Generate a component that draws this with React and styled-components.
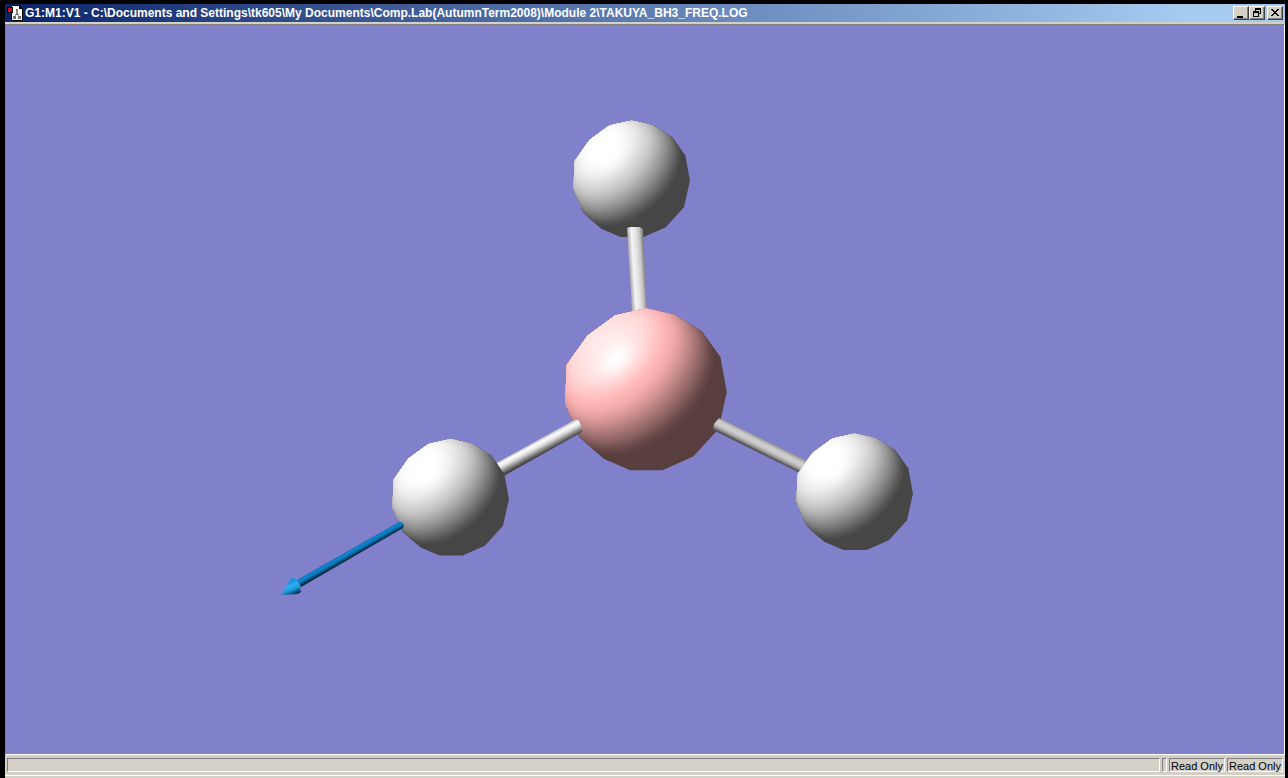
import React from 'react';
import styled, { createGlobalStyle } from 'styled-components';

const GlobalStyle = createGlobalStyle`
    * {
        box-sizing: border-box;
    }

    body {
        margin: 0;
        background: #000;
    }
`;

const Desktop = styled.div`
    display: flex;
    height: 100vh;
    padding: 4px 3px 0 5px;
    background: #000;
`;

const Window = styled.main`
    display: flex;
    flex: 1;
    flex-direction: column;
    min-width: 0;
    background: #d4d0c8;
`;

const TitleBar = styled.header`
    display: flex;
    flex: none;
    align-items: center;
    height: 18px;
    padding: 0 2px;
    background: linear-gradient(to right, #0a246a, #a6caf0 92%);
`;

const Title = styled.h1`
    flex: 1;
    min-width: 0;
    margin: 0 0 0 2px;
    overflow: hidden;
    color: #fff;
    font: bold 12px/18px 'Liberation Sans', Arial, sans-serif;
    text-overflow: ellipsis;
    white-space: nowrap;
`;

const WindowButtons = styled.div`
    display: flex;
`;

const WindowButton = styled.button`
    display: flex;
    width: 16px;
    height: 14px;
    margin-left: ${props => props.$apart ? '2px' : '0'};
    padding: 1px;
    border: 1px solid;
    border-color: #fff #404040 #404040 #fff;
    background: #d4d0c8;
    box-shadow: inset -1px -1px #808080;
`;

const Viewport = styled.section`
    flex: 1;
    min-height: 0;
    margin-top: 2px;
    border: 1px solid;
    border-color: #808080 #fff #fff #808080;
    background: #8180cb;
`;

const Scene = styled.svg`
    display: block;
    width: 100%;
    height: 100%;
`;

const StatusBar = styled.footer`
    display: flex;
    flex: none;
    gap: 2px;
    height: 23px;
    padding: 3px 2px 4px 2px;
    border-bottom: 2px solid #d4d0c8;
    box-shadow: inset 0 -1px #fff;
`;

const StatusPanel = styled.div`
    flex: ${props => props.$fill ? '1' : 'none'};
    min-width: 5px;
    border: 1px solid;
    border-color: #808080 #fff #fff #808080;
    color: #000;
    font: 11px/14px 'Liberation Sans', Arial, sans-serif;
    white-space: nowrap;
`;

const StatusText = styled(StatusPanel)`
    min-width: 56px;
    padding: 0 1px;
`;

// Unit vector towards the lamp is (LIGHT_XY, LIGHT_Z) once the ball is turned so +x faces it
const LIGHT_XY = 0.78;
const LIGHT_Z = 0.62;
const STEPS = 56;

const BALL = '2,-175 65,-161 123,-125 164,-70 178,7 160,87 105,147 38,177 -32,177 -90,152 -142,104 -174,32 -170,-53 -125,-116 -65,-160';

const HYDROGEN = [
    [0, [70, 70, 70]],
    [0.12, [86, 86, 86]],
    [0.35, [136, 136, 136]],
    [0.62, [198, 198, 198]],
    [0.82, [236, 236, 236]],
    [0.95, [255, 255, 255]],
    [1, [255, 255, 255]]
];

const BORON = [
    [0, [89, 62, 62]],
    [0.12, [106, 74, 74]],
    [0.35, [166, 117, 117]],
    [0.6, [240, 168, 168]],
    [0.7, [255, 184, 184]],
    [0.86, [255, 216, 216]],
    [1, [255, 232, 232]]
];

const shade = (ramp, k) => {
    const i = Math.max(1, ramp.findIndex(([stop]) => stop >= k));
    const [k0, from] = ramp[i - 1];
    const [k1, to] = ramp[i];
    const t = (k - k0) / (k1 - k0);
    return `rgb(${from.map((c, n) => Math.round(c + (to[n] - c) * t)).join(',')})`;
};

// Outline of the part of a unit ball that is lit more strongly than k
const litArea = (k) => {
    const a = Math.sqrt(1 - k * k);
    const b = a * LIGHT_Z;
    const u = k / LIGHT_XY;
    if (u >= 1) {
        const c = k * LIGHT_XY;
        return `M${c - b},0A${b},${a} 0 1 1 ${c + b},0A${b},${a} 0 1 1 ${c - b},0Z`;
    }
    const v = Math.sqrt(1 - u * u);
    const large = u > k * LIGHT_XY ? 1 : 0;
    return `M${u},${-v}A${b},${a} 0 ${large} 0 ${u},${v}L${u + 0.1},${v + 0.1}L2,2L2,-2L${u + 0.1},${-v - 0.1}Z`;
};

const Atom = ({ x, y, r, ramp, shine }) => (
    <g transform={`translate(${x} ${y}) scale(${r})`} clipPath="url(#ball)">
        <rect x="-1.1" y="-1.1" width="2.2" height="2.2" fill={shade(ramp, 0)} />
        <g transform="rotate(-132) scale(1.03)">
            {Array.from({ length: STEPS - 1 }, (_, i) => (i + 1) / STEPS).map(k =>
                <path key={k} d={litArea(k)} fill={shade(ramp, k)} />
            )}
        </g>
        <ellipse
            cx="-0.36"
            cy="-0.38"
            rx={shine}
            ry={shine * 0.7}
            fill="url(#shine)"
            transform="rotate(-42 -0.36 -0.38)"
        />
    </g>
);

const Rod = ({ id, points, from, to, stops }) => (
    <g>
        <linearGradient id={id} gradientUnits="userSpaceOnUse" x1={from[0]} y1={from[1]} x2={to[0]} y2={to[1]}>
            {stops.map((color, i) => <stop key={i} offset={i / (stops.length - 1)} stopColor={color} />)}
        </linearGradient>
        <polygon points={points} fill={`url(#${id})`} />
    </g>
);

const Molecule = () => (
    <Scene viewBox="6 25 1278 729" role="img" aria-label="BH3">
        <defs>
            <clipPath id="ball">
                <polygon points={BALL} transform="scale(0.00571)" />
            </clipPath>
            <radialGradient id="shine">
                <stop offset="0" stopColor="#fff" />
                <stop offset="0.25" stopColor="#fff" stopOpacity="0.8" />
                <stop offset="0.6" stopColor="#fff" stopOpacity="0.25" />
                <stop offset="1" stopColor="#fff" stopOpacity="0" />
            </radialGradient>
        </defs>
        <Atom x={631} y={178.5} r={58} ramp={HYDROGEN} shine={0.5} />
        <Rod
            id="bondTop"
            points="627,228 630,227 640,227 643,229 647,311 632,311"
            from={[629, 260]}
            to={[645, 259]}
            stops={['#a8a8a8', '#f4f4f4', '#e4e4e4', '#c4c4c4', '#707070']}
        />
        <Atom x={645} y={389} r={80.5} ramp={BORON} shine={0.5} />
        <Rod
            id="bondLeft"
            points="576,419 579,421 582,428 582,432 500,478 493,465"
            from={[535, 441]}
            to={[542, 454]}
            stops={['#b8b8b8', '#ffffff', '#d8d8d8', '#888888', '#404040']}
        />
        <Rod
            id="bondRight"
            points="719,418 810,462 804,475 713,430 714,424"
            from={[765, 440]}
            to={[759, 452]}
            stops={['#909090', '#c8c8c8', '#d0d0d0', '#a8a8a8', '#505050']}
        />
        <Atom x={450} y={497} r={58} ramp={HYDROGEN} shine={0.5} />
        <Atom x={854} y={491.5} r={58} ramp={HYDROGEN} shine={0.5} />
        <Rod
            id="shaft"
            points="399,522 402,522 404,525 403,528 301,587 297,580"
            from={[348, 551]}
            to={[352, 558]}
            stops={['#0872b4', '#0a88d0', '#0a70b0', '#053c60', '#021c30']}
        />
        <Rod
            id="head"
            points="281,595 292,577 297,580 300,586 301,592 298,594"
            from={[286, 584]}
            to={[292, 598]}
            stops={['#1c94dc', '#28b0f4', '#1c98d8', '#0a5078', '#032030']}
        />
    </Scene>
);

const AppIcon = () => (
    <svg width="16" height="16" viewBox="0 0 16 16" shapeRendering="crispEdges" aria-hidden="true">
        <path d="M4 0h9v1h1v1h1v1h1v13H4z" fill="#000" />
        <path d="M5 1h7v3h3v11H5z" fill="#fff" />
        <path d="M9 5h2v4H9zM8 9h1v2H8zM11 9h1v2h-1z" fill="#999" />
        <path d="M9 4h2v2H9zM9 8h2v2H9zM6 11h3v3H6zM11 11h3v3h-3z" fill="#707070" />
        <rect x="0" y="2" width="6" height="6" fill="#000" />
        <rect x="1" y="3" width="4" height="4" fill="#d01018" />
    </svg>
);

const ButtonGlyph = ({ d }) => (
    <svg width="12" height="10" viewBox="0 0 12 10" shapeRendering="crispEdges" aria-hidden="true">
        <path d={d} fill="#000" fillRule="evenodd" />
    </svg>
);

const MINIMIZE = 'M2 8h6v2H2z';
const RESTORE = 'M4 0h6v6H8V5h1V2H5v1H4zM2 3h6v6H2zM3 5v3h4V5z';
const CLOSE = 'M2 1h2v1h1v1h2V2h1V1h2v1H9v1H8v1H7v1h1v1h1v1h1v1H8V7H7V6H5v1H4v1H2V7h1V6h1V5h1V4H4V3H3V2H2z';

export default function App() {
    return (
        <>
            <GlobalStyle />
            <Desktop>
                <Window>
                    <TitleBar>
                        <AppIcon />
                        <Title>G1:M1:V1 - C:\Documents and Settings\tk605\My Documents\Comp.Lab(AutumnTerm2008)\Module 2\TAKUYA_BH3_FREQ.LOG</Title>
                        <WindowButtons>
                            <WindowButton aria-label="Minimize"><ButtonGlyph d={MINIMIZE} /></WindowButton>
                            <WindowButton aria-label="Restore"><ButtonGlyph d={RESTORE} /></WindowButton>
                            <WindowButton $apart aria-label="Close"><ButtonGlyph d={CLOSE} /></WindowButton>
                        </WindowButtons>
                    </TitleBar>
                    <Viewport>
                        <Molecule />
                    </Viewport>
                    <StatusBar>
                        <StatusPanel $fill />
                        <StatusPanel />
                        <StatusText>Read Only</StatusText>
                        <StatusText>Read Only</StatusText>
                    </StatusBar>
                </Window>
            </Desktop>
        </>
    );
}
